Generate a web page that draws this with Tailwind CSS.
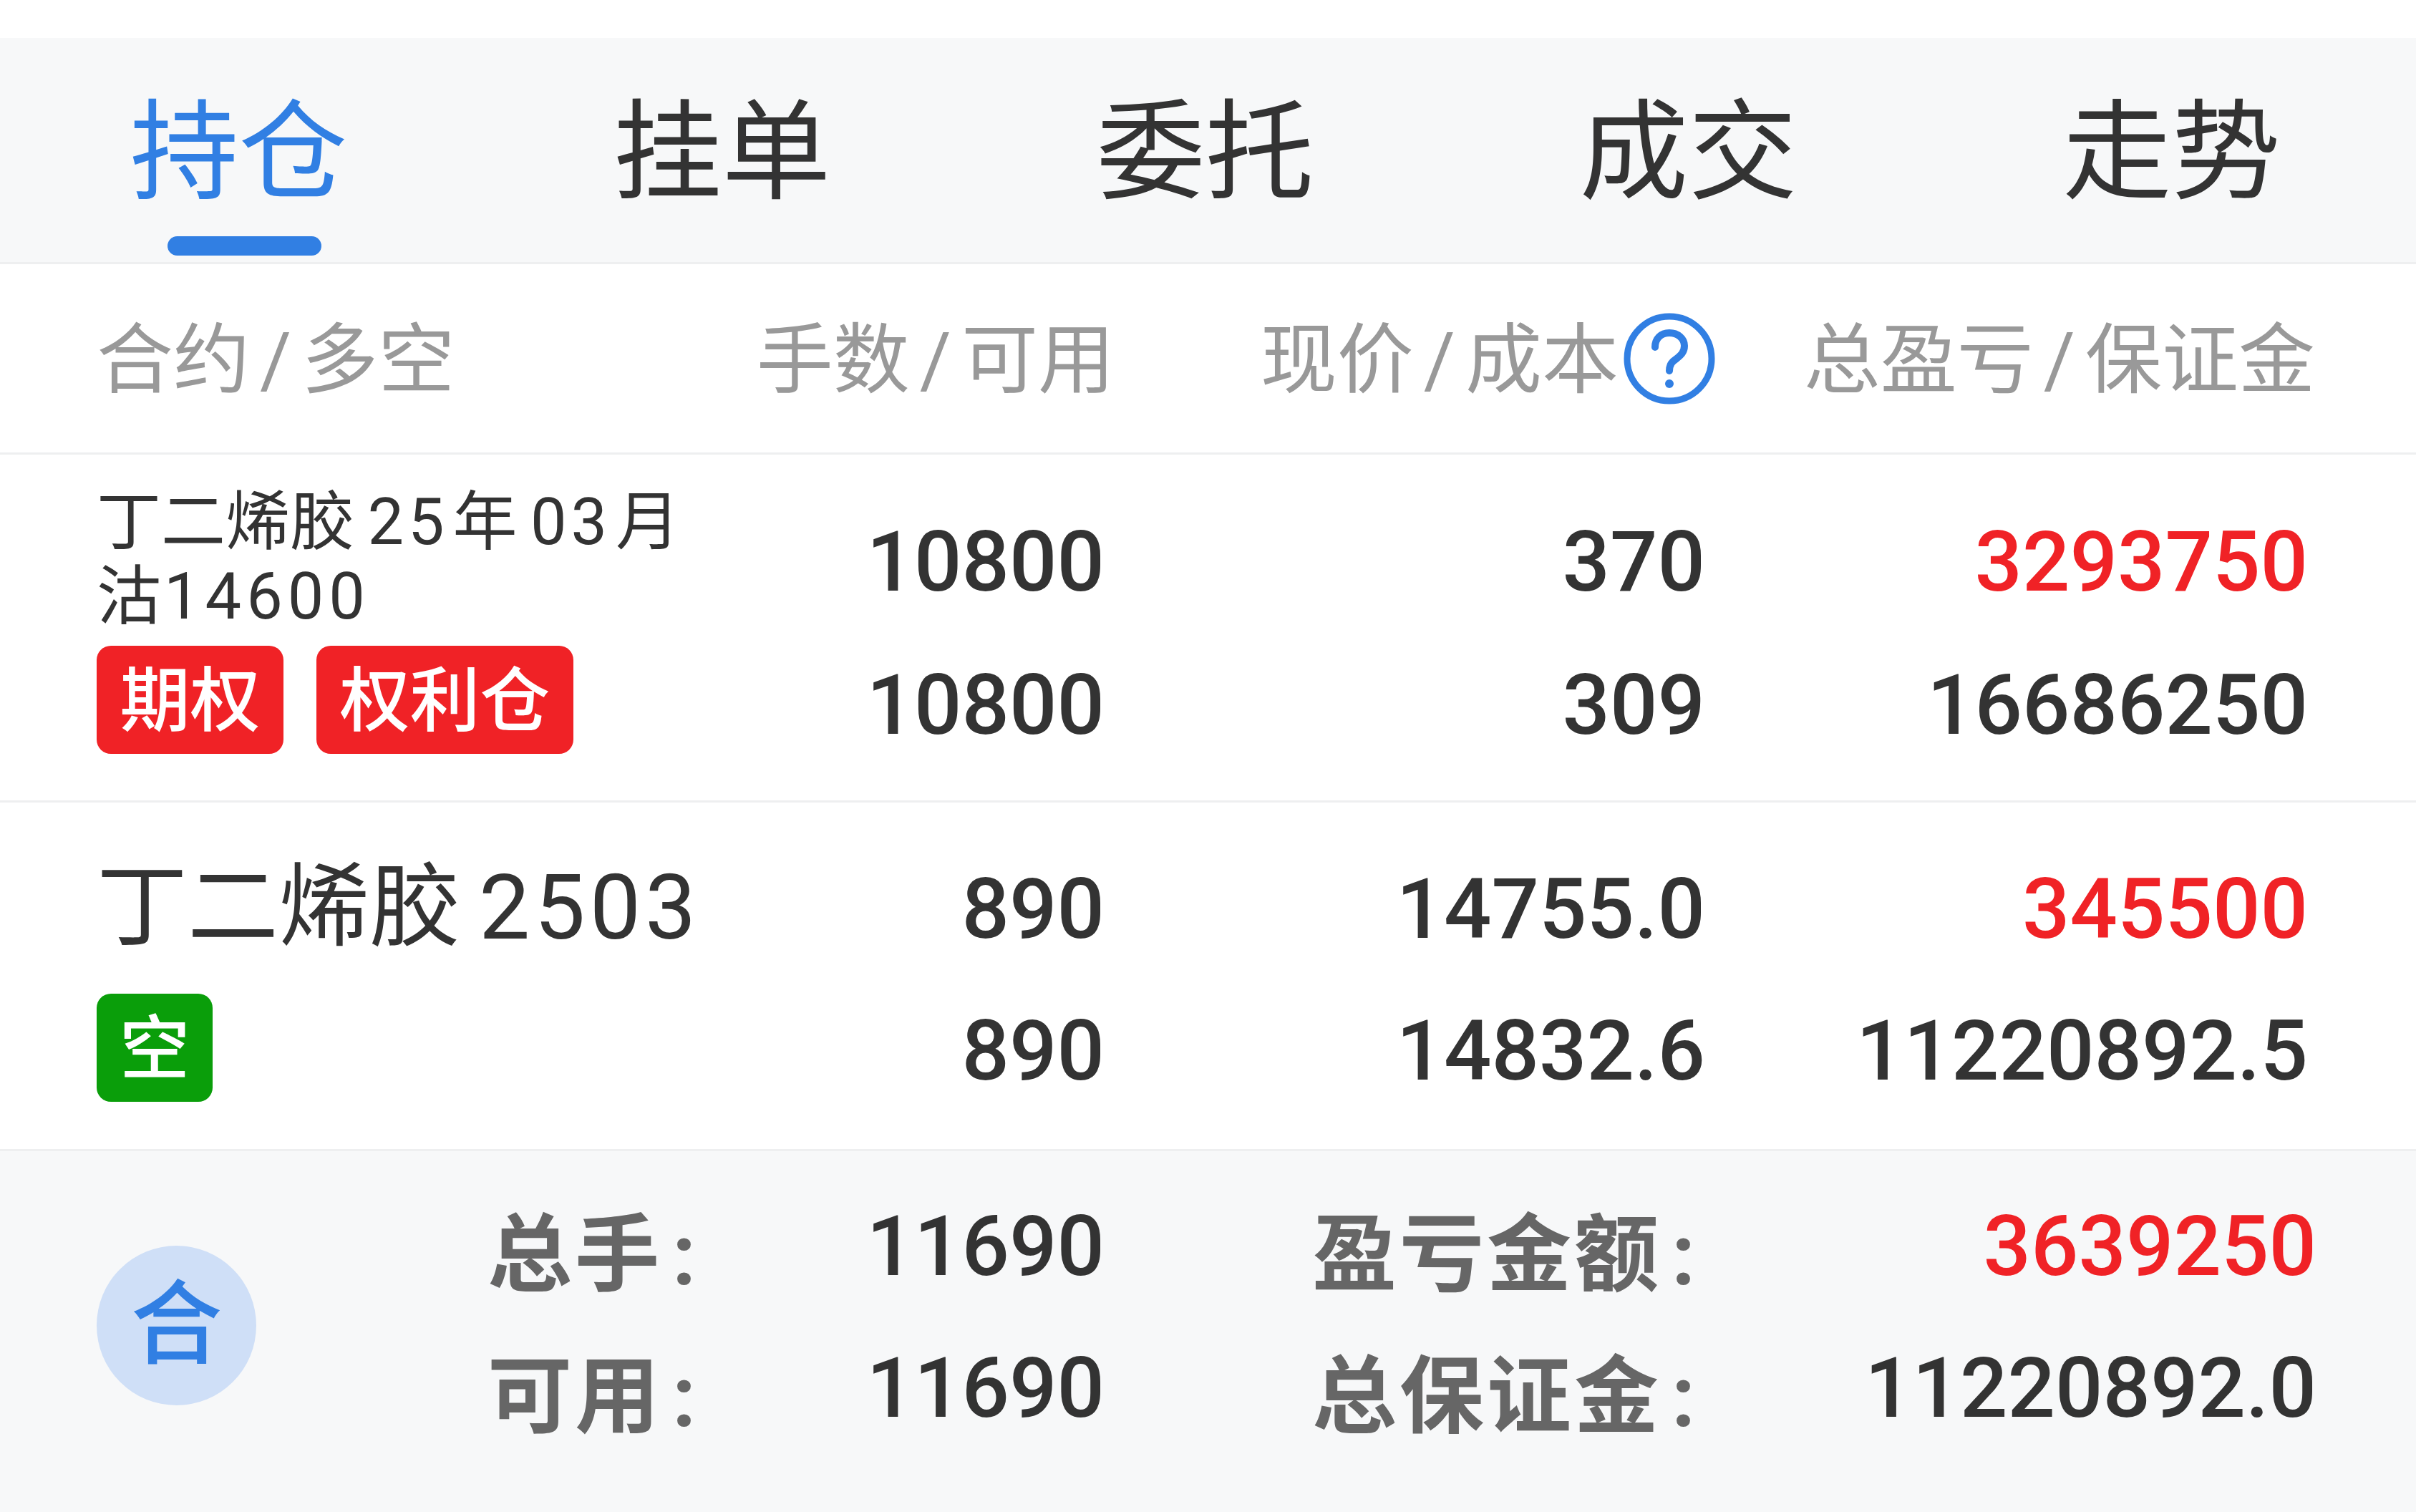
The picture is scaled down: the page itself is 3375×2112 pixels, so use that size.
<!doctype html>
<html>
<head>
  <meta charset="UTF-8" />
  <title>持仓</title>
  <script src="https://cdn.jsdelivr.net/npm/@tailwindcss/browser@4"></script>
</head>
<body class="bg-white font-['Roboto','Noto_Sans_CJK_SC',sans-serif]">
<div class="flex flex-col h-[2112px] w-[3375px] overflow-hidden pt-[53px] text-[#333]">
  <!-- Tabs -->
  <nav class="flex h-[316px] shrink-0 bg-[#f7f8f9] border-b-[3px] border-[#eeeff0] text-[152px] leading-[152px]">
    <div class="flex-1 flex flex-col items-center pt-[85px] pr-[8px] text-[#317fe3]">
      <span>持仓</span>
      <span class="mt-[40px] w-[215px] h-[27px] ml-[16px] rounded-full bg-[#317fe3]"></span>
    </div>
    <div class="flex-1 flex flex-col items-center pt-[85px] pr-[8px]">挂单</div>
    <div class="flex-1 flex flex-col items-center pt-[85px] pr-[8px]">委托</div>
    <div class="flex-1 flex flex-col items-center pt-[85px] pr-[8px]">成交</div>
    <div class="flex-1 flex flex-col items-center pt-[85px] pr-[8px]">走势</div>
  </nav>
  <!-- Column heads -->
  <div class="flex items-center h-[266px] shrink-0 pl-[135px] pr-[141px] border-b-[3px] border-[#eeeff0] text-[107px] leading-[130px] text-[#999]">
    <div class="w-[830px] pt-[6px]">合约<span class="mx-[14px]">/</span>多空</div>
    <div class="w-[592px] pt-[6px] text-right">手数<span class="mx-[14px]">/</span>可用</div>
    <div class="w-[840px] flex items-center justify-end">
      <span class="pt-[6px]">现价<span class="mx-[14px]">/</span>成本</span>
      <svg class="w-[130px] h-[130px] ml-[6px]" viewBox="0 0 130 130" fill="none" stroke="#317fe3" stroke-width="9">
        <circle cx="65" cy="65" r="59" />
        <path d="M45 49c0-12 8-20 20-20s21 8 21 18c0 9-5 13-11 18-6 4-10 8-10 17" stroke-width="10" stroke-linecap="round" />
        <circle cx="65" cy="100" r="6" fill="#317fe3" stroke="none" />
      </svg>
    </div>
    <div class="flex-1 pt-[6px] text-right">总盈亏<span class="mx-[14px]">/</span>保证金</div>
  </div>
  <!-- Option position -->
  <div class="flex h-[486px] shrink-0 pl-[135px] pr-[151px] border-b-[3px] border-[#eeeff0] text-[117px] leading-[200px] font-medium">
    <div class="w-[830px] pt-[43px] font-normal">
      <div class="text-[90px] leading-[104px]">丁二烯胶&#8201;<span class="tracking-[6px]">25</span><span class="ml-[6px]">年</span>&#8201;<span class="tracking-[6px]">03</span><span class="ml-[6px]">月</span><br>沽<span class="ml-[4px] tracking-[7px]">14600</span></div>
      <div class="flex gap-[46px] mt-[16px] text-[98px] leading-[147px] font-medium text-white">
        <span class="w-[261px] pt-[4px] text-center rounded-[20px] bg-[#f02226]">期权</span>
        <span class="w-[359px] pt-[4px] text-center rounded-[20px] bg-[#f02226]">权利仓</span>
      </div>
    </div>
    <div class="w-[578px] pt-[50px] text-right"><div>10800</div><div>10800</div></div>
    <div class="w-[839px] pt-[50px] text-right"><div>370</div><div>309</div></div>
    <div class="flex-1 pt-[50px] text-right"><div class="text-[#f02226]">3293750</div><div>16686250</div></div>
  </div>
  <!-- Future position -->
  <div class="flex h-[484px] shrink-0 pl-[135px] pr-[151px] text-[117px] leading-[198px] font-medium">
    <div class="w-[830px] pt-[72px] font-normal">
      <div class="text-[127px] leading-[150px] whitespace-nowrap">丁二烯胶&#8201;<span class="tracking-[6px]">2503</span></div>
      <div class="mt-[45px] w-[162px] pt-[4px] rounded-[20px] bg-[#0a9e0a] text-center text-[98px] leading-[147px] font-medium text-white">空</div>
    </div>
    <div class="w-[578px] pt-[50px] text-right"><div>890</div><div>890</div></div>
    <div class="w-[839px] pt-[50px] text-right"><div>14755.0</div><div>14832.6</div></div>
    <div class="flex-1 pt-[50px] text-right"><div class="text-[#f02226]">345500</div><div>11220892.5</div></div>
  </div>
  <!-- Totals -->
  <footer class="flex flex-1 items-center pl-[135px] pr-[139px] bg-[#f7f8f9] border-t-[3px] border-[#eeeff0]">
    <div class="w-[223px] h-[223px] shrink-0 mb-[18px] rounded-full bg-[#cfdff7] text-[#317fe3] text-[128px] font-medium flex items-center justify-center">合</div>
    <div class="ml-[323px] w-[862px] mb-[40px] flex flex-col text-[117px] leading-[198px] font-medium">
      <div class="flex justify-between h-[198px]"><span class="mt-[13px] text-[118px] tracking-[4px] font-bold text-[#666]">总手<span class="ml-[14px]">:</span></span><span>11690</span></div>
      <div class="flex justify-between h-[198px]"><span class="mt-[13px] text-[118px] tracking-[4px] font-bold text-[#666]">可用<span class="ml-[14px]">:</span></span><span>11690</span></div>
    </div>
    <div class="ml-[290px] flex-1 mb-[40px] flex flex-col text-[117px] leading-[198px] font-medium">
      <div class="flex justify-between h-[198px]"><span class="mt-[13px] text-[118px] tracking-[4px] font-bold text-[#666]">盈亏金额<span class="ml-[14px]">:</span></span><span class="text-[#f02226]">3639250</span></div>
      <div class="flex justify-between h-[198px]"><span class="mt-[13px] text-[118px] tracking-[4px] font-bold text-[#666]">总保证金<span class="ml-[14px]">:</span></span><span>11220892.0</span></div>
    </div>
  </footer>
</div>
</body>
</html>
